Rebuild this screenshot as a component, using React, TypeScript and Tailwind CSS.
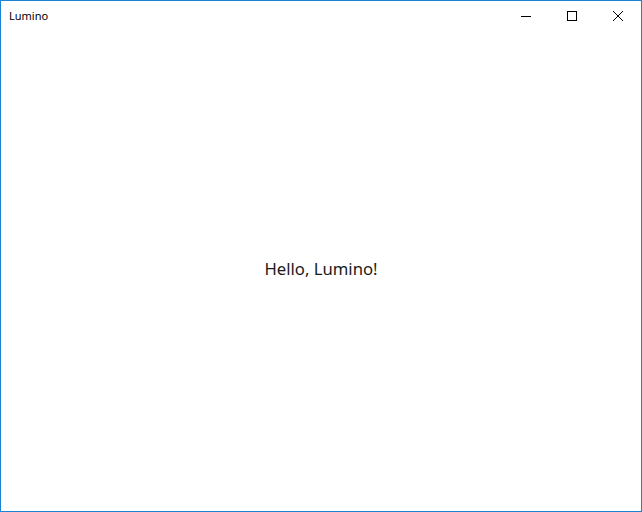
export default function App() {
  return (
    <div
      className="w-[642px] h-[512px] border border-[#1883d7] bg-white flex flex-col"
      style={{ fontFamily: '"Noto Sans", "Open Sans", sans-serif' }}
    >
      {/* Title bar */}
      <div className="h-[30px] flex items-center shrink-0">
        <div className="pl-[8px] pb-[2px] text-[11px] text-black flex-1 leading-none">Lumino</div>
        <div className="flex h-full">
          <div className="w-[46px] h-full flex items-center justify-center">
            <svg width="10" height="10" viewBox="0 0 10 10">
              <path d="M0 5.5H10" stroke="#000" strokeWidth="1" />
            </svg>
          </div>
          <div className="w-[46px] h-full flex items-center justify-center">
            <svg width="10" height="10" viewBox="0 0 10 10">
              <rect x="0.5" y="0.5" width="9" height="9" fill="none" stroke="#000" strokeWidth="1" />
            </svg>
          </div>
          <div className="w-[46px] h-full flex items-center justify-center">
            <svg width="10" height="10" viewBox="0 0 10 10">
              <path d="M0 0L10 10M10 0L0 10" stroke="#000" strokeWidth="1" />
            </svg>
          </div>
        </div>
      </div>

      {/* Content */}
      <div className="flex-1 flex items-center justify-center pb-[4px]">
        <span className="text-[16.7px] text-[#1a1a1a]">Hello, Lumino!</span>
      </div>
    </div>
  );
}
